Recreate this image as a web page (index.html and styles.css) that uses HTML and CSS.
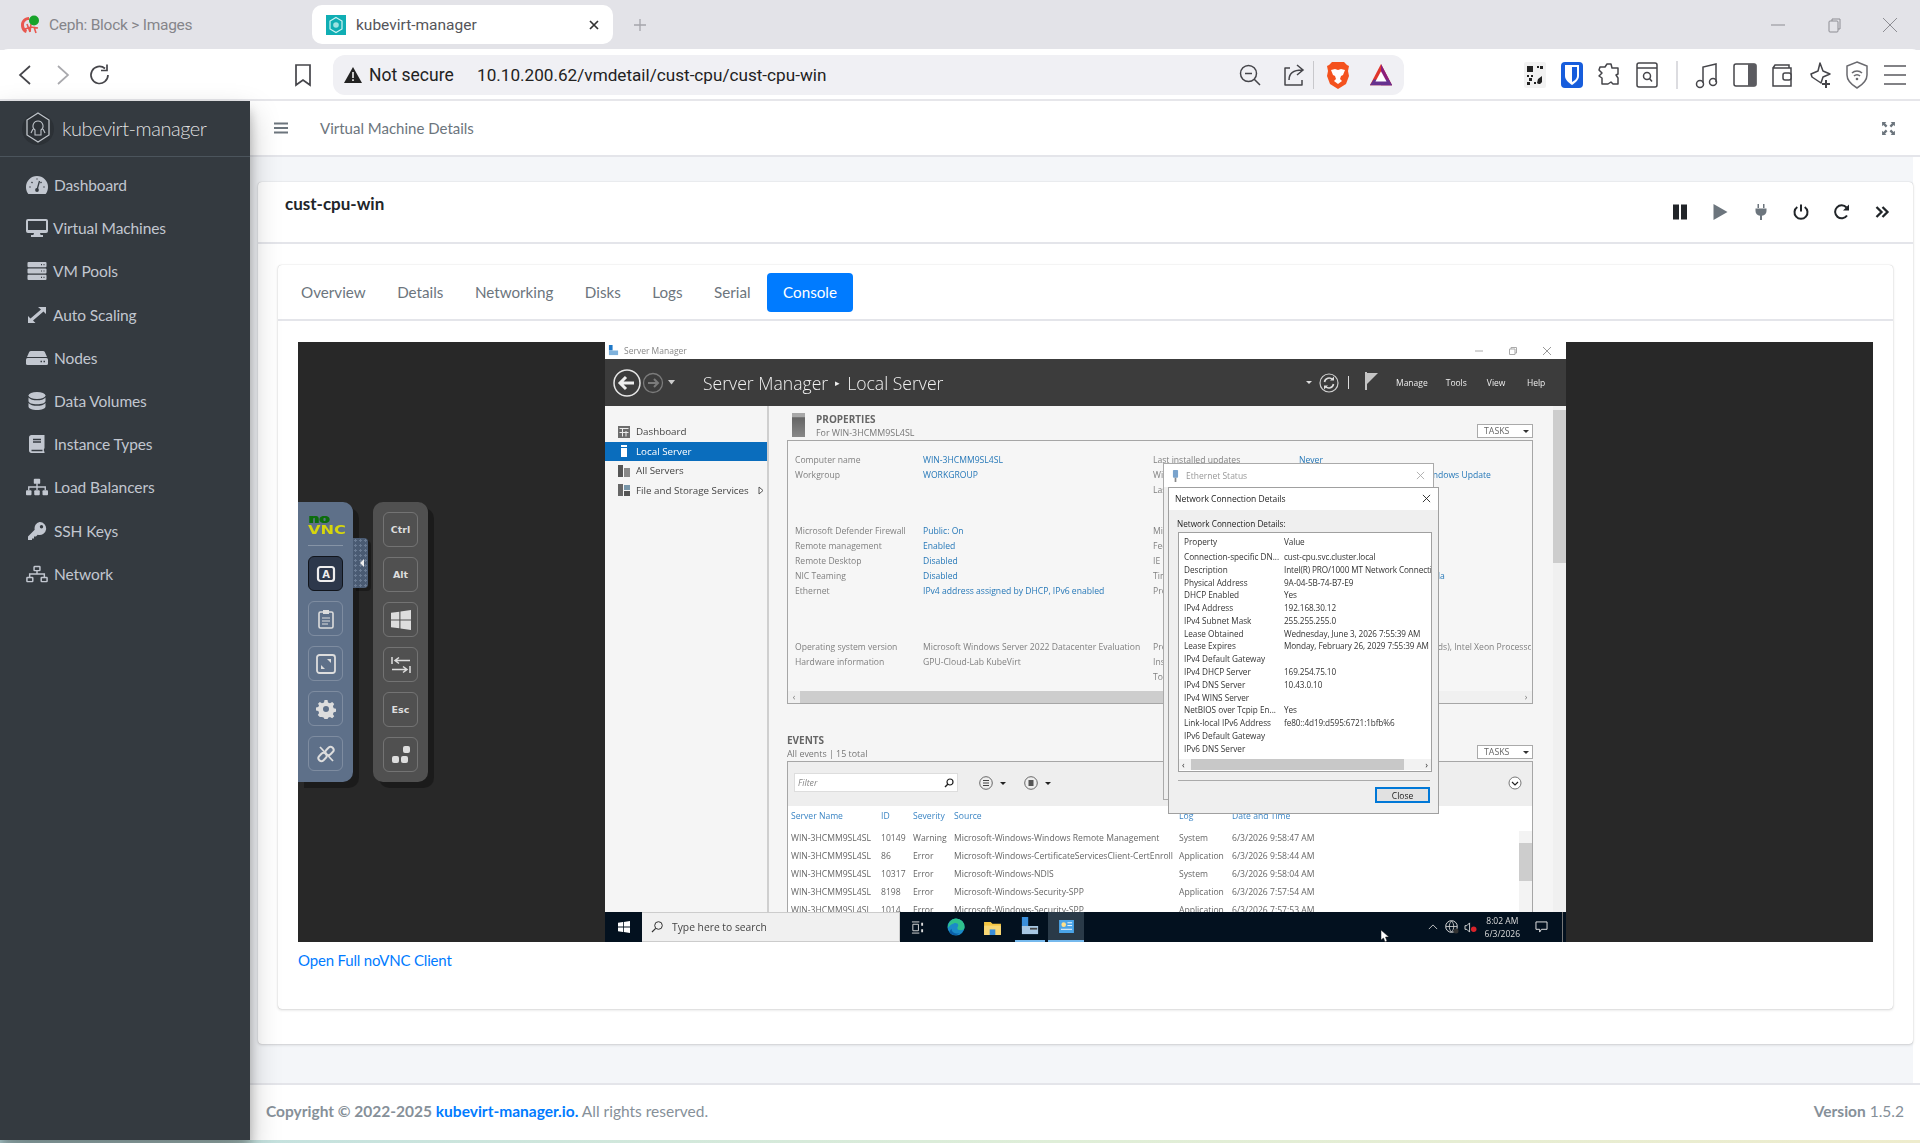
FILE: index.html
```html
<!DOCTYPE html>
<html lang="en">
<head>
<meta charset="utf-8">
<title>kubevirt-manager</title>
<link rel="stylesheet" href="styles.css">
</head>
<body>
<div class="tabstrip">
  <div class="tab">
    <svg class="fav" viewBox="0 0 20 20"><path d="M9 2C4 2 1 6 1 10c0 4 2 7 5 8l1-3c-2-1-3-3-3-5 0-3 2-5 5-5z" fill="#e8584f"/><path d="M7 9l3 8M11 9l-1 8M14 12l2 6M5 14l6-2 7 1" stroke="#e8584f" stroke-width="1.6" fill="none"/><circle cx="14" cy="5.5" r="5" fill="#18a32a"/></svg>
    <span class="tab-ceph">Ceph: Block &gt; Images</span>
  </div>
  <div class="tab tab-active">
    <svg class="fav" viewBox="0 0 20 20"><rect width="20" height="20" fill="#10aeb4"/><path d="M10 2.5l6 3.5v8l-6 3.5L4 14V6z" fill="none" stroke="#cdf3f2" stroke-width="1.2"/><circle cx="10" cy="10" r="2.8" fill="#9ee3e2"/></svg>
    <span class="tab-name">kubevirt-manager</span>
    <svg class="tab-x" viewBox="0 0 12 12"><path d="M2 2l8 8M10 2l-8 8" stroke="#333" stroke-width="1.7"/></svg>
  </div>
  <svg class="tab-plus" viewBox="0 0 14 14"><path d="M7 1v12M1 7h12" stroke="#a5a5ab" stroke-width="1.3"/></svg>
  <div class="win-ctl">
    <svg viewBox="0 0 16 16"><path d="M1 8h14" stroke="#8d8d93"/></svg>
    <svg viewBox="0 0 16 16"><rect x="3" y="4" width="9" height="11" rx="1" fill="none" stroke="#8d8d93"/><path d="M6 4V2h8v10h-2" fill="none" stroke="#8d8d93"/></svg>
    <svg viewBox="0 0 16 16"><path d="M1 1l14 14M15 1L1 15" stroke="#8d8d93"/></svg>
  </div>
</div>

<div class="toolbar">
  <svg class="tb-ic back" viewBox="0 0 24 24"><path d="M16 3L6 12l10 9" fill="none" stroke="#45454a" stroke-width="1.7"/></svg>
  <svg class="tb-ic fwd" viewBox="0 0 24 24"><path d="M8 3l10 9-10 9" fill="none" stroke="#a9a9ad" stroke-width="1.7"/></svg>
  <svg class="tb-ic reload" viewBox="0 0 24 24"><path d="M20 12a8.5 8.5 0 1 1-3-6.5" fill="none" stroke="#45454a" stroke-width="1.7"/><path d="M19 1.500v6h-6" fill="none" stroke="#45454a" stroke-width="1.700"/></svg>
  <svg class="tb-ic bookmark" viewBox="0 0 24 24"><path d="M5 2h14v20l-7-5-7 5z" fill="none" stroke="#45454a" stroke-width="1.7"/></svg>
  <div class="addr">
    <svg class="warn" viewBox="0 0 18 16"><path d="M9 0l9 16H0z" fill="#222"/><path d="M9 5v6M9 12.300v1.700" stroke="#fff" stroke-width="1.500"/></svg>
    <span class="ns">Not secure</span>
    <span class="url">10.10.200.62/vmdetail/cust-cpu/cust-cpu-win</span>
    <svg class="tb-ic zoomout" viewBox="0 0 24 24"><circle cx="10.500" cy="10.500" r="8" fill="none" stroke="#45454a" stroke-width="1.500"/><path d="M16 16l6 6M7 10.500h7" stroke="#45454a" stroke-width="1.500"/></svg>
    <svg class="tb-ic share" viewBox="0 0 24 24"><path d="M9 5H4v17h17v-5" fill="none" stroke="#45454a" stroke-width="1.500" stroke-linejoin="round"/><path d="M8 17c0-7 4-10 13-10M16 2l6 5-6 5" fill="none" stroke="#45454a" stroke-width="1.500"/></svg>
    <i class="tb-sep"></i>
    <svg class="tb-ic brave" viewBox="0 0 24 28"><path d="M6 1h12l3 3 2 1-1 5 1 5-3 8-8 5-8-5-3-8 1-5-1-5 2-1z" fill="#f4521e"/><path d="M5 9l4-1 3 1 3-1 4 1-2 5-2 1-1 3 2 2-4 3-4-3 2-2-1-3-2-1z" fill="#fff"/></svg>
    <svg class="tb-ic bat" viewBox="0 0 26 26"><path d="M13 1l12 23H1z" fill="#e0362c"/><path d="M13 1l12 23H13z" fill="#8a1f7d"/><path d="M1 24h24l-4-6H5z" fill="#66318f"/><path d="M13 9l6 11H7z" fill="#fff"/></svg>
  </div>
  <svg class="ext qr" viewBox="0 0 22 26"><rect width="22" height="26" rx="2" fill="#f2f2f2"/><path d="M3 4h6v6H3zM13 4h2v2h-2zM16 4h3v3h-3zM3 13h2v2H3zM7 13h2v2H7zM5 16h3v3H5zM3 20h3v3H3zM10 20h2v2h-2zM14 17l4-3v4a3 3 0 0 1-5 3z" fill="#222"/></svg>
  <svg class="ext" viewBox="0 0 24 28"><rect x="1" y="1" width="22" height="26" rx="4" fill="#175ddc"/><path d="M5 4h14v11c0 4-4 7-7 9-3-2-7-5-7-9z" fill="#fff"/><path d="M12 6h5v9c0 3-3 5-5 6z" fill="#175ddc"/></svg>
  <svg class="ext" viewBox="0 0 24 26"><path d="M10 2h4l1 4h6v6l-2 1 2 3v6h-5l-2-2-3 2H5v-6l-3-2 3-3-3-3 1-3h5z" fill="none" stroke="#45454a" stroke-width="1.500" stroke-linejoin="round"/></svg>
  <svg class="ext" viewBox="0 0 24 26"><rect x="2" y="1" width="20" height="24" rx="2" fill="none" stroke="#45454a" stroke-width="1.500"/><path d="M2 6h20" stroke="#45454a" stroke-width="1.500"/><circle cx="12" cy="14" r="3.500" fill="none" stroke="#45454a" stroke-width="1.500"/><path d="M14.500 16.500l2.500 3" stroke="#45454a" stroke-width="1.500"/></svg>
  <i class="tb-sep sep2"></i>
  <svg class="ext" viewBox="0 0 24 28"><path d="M8 22V6l13-3v18" fill="none" stroke="#45454a" stroke-width="1.500"/><circle cx="5" cy="23" r="3.500" fill="none" stroke="#45454a" stroke-width="1.500"/><circle cx="18" cy="21" r="3.500" fill="none" stroke="#45454a" stroke-width="1.500"/></svg>
  <svg class="ext" viewBox="0 0 24 26"><rect x="1" y="2" width="22" height="22" rx="2" fill="none" stroke="#45454a" stroke-width="1.500"/><rect x="15" y="2" width="8" height="22" fill="#5b5b60"/></svg>
  <svg class="ext" viewBox="0 0 24 26"><path d="M3 6h18v18H3zM3 6l2-3h14v3" fill="none" stroke="#45454a" stroke-width="1.500"/><rect x="13" y="11" width="8" height="7" rx="2" fill="#fff" stroke="#45454a" stroke-width="1.500"/></svg>
  <svg class="ext" viewBox="0 0 24 28"><path d="M12 2l3 8 7 3-7 3-2 6-9-6-1-3 7-3z" fill="none" stroke="#45454a" stroke-width="1.500" stroke-linejoin="round"/><path d="M18 19v8M14 23h8" stroke="#45454a" stroke-width="2"/></svg>
  <svg class="ext" viewBox="0 0 24 28"><path d="M12 1l10 4v9c0 6-5 10-10 13C7 24 2 20 2 14V5z" fill="none" stroke="#6a6a6f" stroke-width="1.500"/><path d="M7 12a7 7 0 0 1 10 0M9 15a4 4 0 0 1 6 0" fill="none" stroke="#6a6a6f" stroke-width="1.500"/><circle cx="12" cy="18" r="1.300" fill="#6a6a6f"/></svg>
  <svg class="ext" viewBox="0 0 24 24"><path d="M1 3h22M1 12h22M1 21h22" stroke="#5a5a5f" stroke-width="1.500"/></svg>
</div>

<div class="app">
  <aside class="sidebar">
    <div class="brand">
      <svg class="brand-logo" viewBox="0 0 36 36"><circle cx="18" cy="19" r="16" fill="#2c3136"/><path d="M18 3l11 7v15l-11 7-11-7V10z" fill="none" stroke="#bfc4ca" stroke-width="1.300"/><path d="M18 11a5 5 0 0 0-3 9v5h6v-5a5 5 0 0 0-3-9zM13 19l-2 4M23 19l2 4" fill="none" stroke="#bfc4ca" stroke-width="1.100"/></svg>
      <span class="brand-text">kubevirt-manager</span>
    </div>
    <nav class="menu">
      <a class="menu-item"><svg viewBox="0 0 22 18"><path d="M11 0a11 11 0 0 0-11 11c0 2.200.6 4.300 1.600 6 .2.400.6 1 1.400 1h16c.8 0 1.200-.6 1.400-1 1-1.700 1.600-3.800 1.600-6A11 11 0 0 0 11 0z" fill="currentColor"/><path d="M11 14l2.500-9M3.500 11h1M5.500 6l1 1M11 2.500v1M17.500 11h1M15.500 6l-1 1" stroke="#343a40" stroke-width="1.300"/><circle cx="11" cy="14" r="1.900" fill="#343a40"/></svg>Dashboard</a>
      <a class="menu-item"><svg viewBox="0 0 22 18"><path d="M2 0h18a2 2 0 0 1 2 2v10a2 2 0 0 1-2 2h-6l.6 2H17v2H5v-2h2.400L8 14H2a2 2 0 0 1-2-2V2a2 2 0 0 1 2-2zm0 2v9h18V2z" fill="currentColor" fill-rule="evenodd"/></svg><span class="tl">Virtual Machines</span></a>
      <a class="menu-item"><svg viewBox="0 0 22 18"><g fill="currentColor"><rect x="1.500" y="0" width="19" height="5.200" rx="1"/><rect x="1.500" y="6.400" width="19" height="5.200" rx="1"/><rect x="1.500" y="12.800" width="19" height="5.200" rx="1"/></g><path d="M15 2.600h1M17.500 2.600h1M15 9h1M17.500 9h1M15 15.400h1M17.500 15.400h1" stroke="#343a40" stroke-width="1.200"/></svg><span class="tl">VM Pools</span></a>
      <a class="menu-item"><svg viewBox="0 0 22 18"><path d="M12 1h8v7l-2.500-2.400L7 14.500 9.500 17H2v-7l2.500 2.500L15 3.500z" fill="currentColor"/></svg><span class="tl">Auto Scaling</span></a>
      <a class="menu-item"><svg viewBox="0 0 22 18"><path d="M5 2h12c.8 0 1.400.4 1.800 1L21 8H1l2.200-5C3.600 2.400 4.200 2 5 2z" fill="currentColor"/><rect x="0" y="9" width="22" height="7" rx="1.500" fill="currentColor"/><path d="M14.500 12.500h1.500M17.500 12.500H19" stroke="#343a40" stroke-width="1.300"/></svg>Nodes</a>
      <a class="menu-item"><svg viewBox="0 0 22 18"><g fill="currentColor"><ellipse cx="11" cy="3.500" rx="8.500" ry="3.500"/><path d="M2.500 5.500c1.500 2 5 2.800 8.500 2.800s7-.8 8.500-2.800V9c0 2-3.800 3.300-8.500 3.300S2.500 11 2.500 9z"/><path d="M2.500 11c1.500 2 5 2.800 8.500 2.800s7-.8 8.500-2.800v3.500C19.500 16.500 15.700 18 11 18s-8.500-1.500-8.500-3.500z"/></g></svg>Data Volumes</a>
      <a class="menu-item"><svg viewBox="0 0 22 18"><path d="M5.500 0H18.500v13c0 .5-.2.800-.6 1v2.200c.4.200.6.500.6.800v1H5.500C4 18 3 17 3 15.500v-13C3 1 4 0 5.500 0z" fill="currentColor"/><path d="M7 4.500h8M7 7h8M5.500 15.500h11" stroke="#343a40" stroke-width="1.300"/></svg>Instance Types</a>
      <a class="menu-item"><svg viewBox="0 0 24 18"><g fill="currentColor"><rect x="8.500" y="0" width="7" height="5.500" rx="1"/><rect x="0" y="12.500" width="6" height="5.500" rx="1"/><rect x="9" y="12.500" width="6" height="5.500" rx="1"/><rect x="18" y="12.500" width="6" height="5.500" rx="1"/></g><path d="M12 5v7.500M3 12.500V9h18v3.500" fill="none" stroke="currentColor" stroke-width="1.500"/></svg>Load Balancers</a>
      <a class="menu-item"><svg viewBox="0 0 22 18"><path d="M13.500 0a6.500 6.500 0 1 1-1.800 12.700l-1.700 1.800H8v2H6v1.500H2v-3.500l6.700-6.800A6.500 6.500 0 0 1 13.500 0zm2 3a1.700 1.700 0 1 0 0 3.400 1.700 1.700 0 0 0 0-3.400z" fill="currentColor" fill-rule="evenodd"/></svg><span>SSH Keys</span></a>
      <a class="menu-item"><svg viewBox="0 0 24 18"><g fill="none" stroke="currentColor" stroke-width="1.600"><rect x="8.800" y=".8" width="6.400" height="4.500" rx=".6"/><rect x="1" y="12.800" width="6.400" height="4.500" rx=".6"/><rect x="16.600" y="12.800" width="6.400" height="4.500" rx=".6"/><path d="M12 5.500v3.500M4 12.500V9h16v3.500"/></g></svg>Network</a>
    </nav>
  </aside>

  <main class="main">
    <header class="topbar">
      <svg class="burger" viewBox="0 0 14 12"><path d="M0 1.500h14M0 6h14M0 10.500h14" stroke="#6c757d" stroke-width="1.800"/></svg>
      <span class="crumb">Virtual Machine Details</span>
      <svg class="expand" viewBox="0 0 14 14"><path d="M1 1h4L3.800 2.200 6 4.500 4.500 6 2.200 3.800 1 5zM13 1v4l-1.200-1.200L9.500 6 8 4.500l2.200-2.300L9 1zM1 13V9l1.200 1.200L4.500 8 6 9.500l-2.200 2.300L5 13zM13 13H9l1.200-1.200L8 9.500 9.500 8l2.300 2.200L13 9z" fill="#6c757d"/></svg>
    </header>

    <section class="content">
      <div class="card">
        <div class="card-head">
          <h1 class="vm-name">cust-cpu-win</h1>
          <div class="actions">
            <svg viewBox="0 0 16 16"><path d="M1 .5h6v15H1zM9 .5h6v15H9z" fill="#212529"/></svg>
            <svg viewBox="0 0 16 16"><path d="M1.500 0L15.500 8 1.500 16z" fill="#6c757d"/></svg>
            <svg viewBox="0 0 16 16"><path d="M4.500 0h1.500v4H4.500zM10 0h1.500v4H10zM2.500 4.500h11v2.500c0 2.500-1.800 4.300-4.500 4.700V16H7v-4.300C4.300 11.300 2.500 9.500 2.500 7z" fill="#6c757d"/></svg>
            <svg viewBox="0 0 16 16"><path d="M8 .5v7" stroke="#212529" stroke-width="2"/><path d="M4.300 3a6.500 6.500 0 1 0 7.400 0" fill="none" stroke="#212529" stroke-width="2"/></svg>
            <svg viewBox="0 0 16 16"><path d="M13 11.500A6.500 6.500 0 1 1 12.500 3.500" fill="none" stroke="#212529" stroke-width="2"/><path d="M15 .5V6.500H9z" fill="#212529"/></svg>
            <svg viewBox="0 0 16 16"><path d="M2.500 3l5 5-5 5M8.500 3l5 5-5 5" fill="none" stroke="#212529" stroke-width="2.300"/></svg>
          </div>
        </div>
        <div class="card-body">
          <div class="inner">
            <div class="tabs">
              <a class="t">Overview</a><a class="t">Details</a><a class="t">Networking</a><a class="t">Disks</a><a class="t">Logs</a><a class="t">Serial</a><a class="t on">Console</a>
            </div>
            <div class="inner-body">
              <div class="screen">
                <div class="vm">
                  <div class="sm-title">
                    <svg viewBox="0 0 12 12" class="sm-ic"><rect x="1" y="0" width="4" height="6" fill="#1f78c8"/><rect x="1" y="6" width="10" height="5" fill="#7fb2dc"/></svg>
                    <span>Server Manager</span>
                    <div class="sm-ctl">
                      <svg viewBox="0 0 10 10"><path d="M1 5h8" stroke="#aaa"/></svg>
                      <svg viewBox="0 0 10 10"><path d="M1.500 3h5.500v5.500H1.500zM3 3V1.500h5.500V7H7" fill="none" stroke="#aaa"/></svg>
                      <svg viewBox="0 0 10 10"><path d="M1 1l8 8M9 1L1 9" stroke="#999"/></svg>
                    </div>
                  </div>
                  <div class="sm-head">
                    <svg class="sm-back" viewBox="0 0 62 28"><circle cx="14" cy="14" r="13" fill="none" stroke="#e6e6e6" stroke-width="1.500"/><path d="M7 14h14M13 8l-6 6 6 6" fill="none" stroke="#eee" stroke-width="3"/><circle cx="40" cy="14" r="9.500" fill="none" stroke="#7b7b7b" stroke-width="1.300"/><path d="M35 14h10M41 10l4 4-4 4" fill="none" stroke="#7b7b7b" stroke-width="2"/><path d="M55 11h7l-3.500 4.500z" fill="#ccc"/></svg>
                    <div class="sm-crumb"><span>Server Manager</span><i>▸</i><span>Local Server</span></div>
                    <div class="sm-tools">
                      <i class="sm-dd"></i>
                      <svg viewBox="0 0 20 20" class="ref"><circle cx="10" cy="10" r="9" fill="none" stroke="#cfcfcf" stroke-width="1.200"/><path d="M5.500 9a4.700 4.700 0 0 1 8-2.500M14.500 11a4.700 4.700 0 0 1-8 2.500" fill="none" stroke="#ddd" stroke-width="1.600"/><path d="M15 3.500v4h-4zM5 16.500v-4h4z" fill="#ddd"/></svg>
                      <i class="sm-bar"></i>
                      <svg viewBox="0 0 13 18" class="flag"><path d="M0 0h2v18H0z" fill="#c4c4c4"/><path d="M2 1h11L2 12z" fill="#c4c4c4"/></svg>
                      <span class="m1">Manage</span><span class="m2">Tools</span><span class="m3">View</span><span class="m4">Help</span>
                    </div>
                  </div>
                  <div class="sm-body">
                    <div class="sm-nav">
                      <div class="sn"><svg viewBox="0 0 12 12"><path d="M0 0h12v12H0z" fill="#6d6d6d"/><path d="M1.500 2.500h9M4.500 2.500v8M8 5v5.500M1.500 6.500h9" stroke="#eee"/></svg>Dashboard</div>
                      <div class="sn sel"><svg viewBox="0 0 12 12"><rect x="3" y="0" width="6" height="12" fill="#fff"/><path d="M3 2.500h6" stroke="#0a6dbd"/></svg>Local Server</div>
                      <div class="sn"><svg viewBox="0 0 12 12"><rect x="0" y="0" width="5" height="12" fill="#555"/><rect x="6" y="3" width="6" height="9" fill="#888"/></svg>All Servers</div>
                      <div class="sn"><svg viewBox="0 0 12 12"><rect x="0" y="0" width="5" height="12" fill="#666"/><rect x="6" y="1" width="6" height="5" fill="#7895a8"/><rect x="6" y="7" width="6" height="5" fill="#555"/></svg>File and Storage Services<svg class="sn-arr" viewBox="0 0 6 9"><path d="M1 1l4 3.500L1 8z" fill="#fff" stroke="#555"/></svg></div>
                    </div>
                    <div class="sm-main">
                      <div class="sec-head">
                        <i class="srv-ic"></i>
                        <div class="sec-txt"><b>PROPERTIES</b><span>For WIN-3HCMM9SL4SL</span></div>
                        <div class="tasks">TASKS<i></i></div>
                      </div>
                      <div class="prop-box">
                        <div class="pg">
                          <div class="pr"><span>Computer name</span><a>WIN-3HCMM9SL4SL</a><span>Last installed updates</span><a>Never</a></div>
                          <div class="pr"><span>Workgroup</span><a>WORKGROUP</a><span>Windows Update</span><a class="wu">Install updates only by using Windows Update</a></div>
                          <div class="pr"><span></span><a></a><span>Last checked for updates</span><a>Never</a></div>
                        </div>
                        <div class="pg pg2">
                          <div class="pr"><span>Microsoft Defender Firewall</span><a>Public: On</a><span>Microsoft Defender Antivirus</span><a></a></div>
                          <div class="pr"><span>Remote management</span><a>Enabled</a><span>Feedback &amp; Diagnostics</span><a></a></div>
                          <div class="pr"><span>Remote Desktop</span><a>Disabled</a><span>IE Enhanced Security</span><a></a></div>
                          <div class="pr"><span>NIC Teaming</span><a>Disabled</a><span>Time zone</span><a class="tz">(UTC) Pacific Time (US &amp; Canada</a></div>
                          <div class="pr"><span>Ethernet</span><a>IPv4 address assigned by DHCP, IPv6 enabled</a><span>Product ID</span><a></a></div>
                        </div>
                        <div class="pg pg3">
                          <div class="pr"><span>Operating system version</span><span>Microsoft Windows Server 2022 Datacenter Evaluation</span><span>Processors</span><span class="cpu">QEMU (8 threads), Intel Xeon Processor</span></div>
                          <div class="pr"><span>Hardware information</span><span>GPU-Cloud-Lab KubeVirt</span><span>Installed memory</span><span></span></div>
                          <div class="pr"><span></span><span></span><span>Total disk space</span><span></span></div>
                        </div>
                        <div class="hbar"><i class="ar">‹</i><i class="th"></i><i class="ar">›</i></div>
                      </div>
                      <div class="sec-head ev-head">
                        <div class="sec-txt"><b>EVENTS</b><span>All events | 15 total</span></div>
                        <div class="tasks">TASKS<i></i></div>
                      </div>
                      <div class="ev-box">
                        <div class="ev-tool">
                          <div class="filter"><em>Filter</em><svg viewBox="0 0 10 10"><circle cx="6" cy="4" r="3" fill="none" stroke="#222" stroke-width="1.200"/><path d="M4 6L1 9" stroke="#222" stroke-width="1.500"/></svg></div>
                          <svg class="ev-ic" viewBox="0 0 14 14"><circle cx="7" cy="7" r="6.300" fill="none" stroke="#666"/><path d="M4 4.500h6M4 7h6M4 9.500h6" stroke="#444"/></svg><i class="dd"></i>
                          <svg class="ev-ic second" viewBox="0 0 14 14"><circle cx="7" cy="7" r="6.300" fill="none" stroke="#666"/><rect x="4.500" y="4" width="5" height="6" fill="#555"/></svg><i class="dd"></i>
                          <svg class="ev-chev" viewBox="0 0 14 14"><circle cx="7" cy="7" r="6" fill="#fff" stroke="#777"/><path d="M4 6l3 3 3-3" fill="none" stroke="#222" stroke-width="1.200"/></svg>
                        </div>
                        <div class="ev-row ev-hd"><span>Server Name</span><span>ID</span><span>Severity</span><span>Source</span><span>Log</span><span>Date and Time</span></div>
                        <div class="ev-row"><span>WIN-3HCMM9SL4SL</span><span>10149</span><span>Warning</span><span>Microsoft-Windows-Windows Remote Management</span><span>System</span><span>6/3/2026 9:58:47 AM</span></div>
                        <div class="ev-row"><span>WIN-3HCMM9SL4SL</span><span>86</span><span>Error</span><span>Microsoft-Windows-CertificateServicesClient-CertEnroll</span><span>Application</span><span>6/3/2026 9:58:44 AM</span></div>
                        <div class="ev-row"><span>WIN-3HCMM9SL4SL</span><span>10317</span><span>Error</span><span>Microsoft-Windows-NDIS</span><span>System</span><span>6/3/2026 9:58:04 AM</span></div>
                        <div class="ev-row"><span>WIN-3HCMM9SL4SL</span><span>8198</span><span>Error</span><span>Microsoft-Windows-Security-SPP</span><span>Application</span><span>6/3/2026 7:57:54 AM</span></div>
                        <div class="ev-row"><span>WIN-3HCMM9SL4SL</span><span>1014</span><span>Error</span><span>Microsoft-Windows-Security-SPP</span><span>Application</span><span>6/3/2026 7:57:53 AM</span></div>
                        <div class="ev-scroll"><i></i></div>
                      </div>
                    </div>
                    <div class="sm-scroll"><i></i></div>
                  </div>
                  <div class="taskbar">
                    <div class="start"><svg viewBox="0 0 12 12"><path d="M0 1.700L5 1v4.500H0zM5.800.9L12 0v5.500H5.800zM0 6.400h5V11l-5-.7zM5.800 6.400H12V12l-6.200-.9z" fill="#fff"/></svg></div>
                    <div class="search"><svg viewBox="0 0 12 12"><circle cx="7.500" cy="4.500" r="3.800" fill="none" stroke="#333"/><path d="M4.700 7.300L1 11" stroke="#333" stroke-width="1.200"/></svg>Type here to search</div>
                    <svg class="tk tv" viewBox="0 0 14 14"><path d="M1 1h8M1 13h8M2 3.500h6v7H2z" fill="none" stroke="#ddd"/><path d="M11 2h2v3h-2zM11 9h2v3h-2z" fill="#ddd"/></svg>
                    <svg class="tk edge" viewBox="0 0 20 20"><circle cx="10" cy="10" r="9.500" fill="#1b8ac8"/><path d="M10 .5a9.500 9.500 0 0 1 9.500 10c0 2-2 3-4 3-3 0-4-1-4-2.500 0-1 1-1.500 1-3 0-2-3-3-5-2C4 7 2.500 9 1 11 1 5 5 .5 10 .5z" fill="#2fc18c"/><path d="M5 12c0 4 4 6 9 5-3 3-9 2.500-11-1 0-2 1-3 2-4z" fill="#0a5ea8"/></svg>
                    <svg class="tk folder" viewBox="0 0 18 16"><path d="M0 2h7l2 2h9v12H0z" fill="#f4c542"/><rect x="0" y="6" width="18" height="10" fill="#f8d775"/><rect x="6" y="10" width="6" height="6" fill="#3a8edb"/></svg>
                    <div class="tk-wrap sm-app"><svg viewBox="0 0 20 20"><rect x="1" y="0" width="7" height="13" fill="#3a8edb"/><rect x="1" y="10" width="18" height="9" fill="#a8c7e3"/><rect x="10" y="12" width="8" height="2" fill="#444"/></svg></div>
                    <div class="tk-wrap cp-app"><svg viewBox="0 0 16 14"><rect width="16" height="14" fill="#4aa4e8"/><circle cx="5" cy="5" r="2.500" fill="#ffe08a"/><path d="M9 3h5M9 6h5M2 10h12" stroke="#fff"/></svg></div>
                    <div class="tray">
                      <svg class="chev" viewBox="0 0 12 7"><path d="M1 6l5-5 5 5" fill="none" stroke="#ddd"/></svg>
                      <svg class="globe" viewBox="0 0 14 14"><circle cx="6.500" cy="6.500" r="5.800" fill="none" stroke="#ddd"/><path d="M1 6.500h11M6.500 1c-3 3-3 8 0 11M6.500 1c3 3 3 8 0 11" fill="none" stroke="#ddd" stroke-width=".8"/><circle cx="11" cy="11" r="2.500" fill="#333"/></svg>
                      <svg class="spk" viewBox="0 0 14 12"><path d="M1 4h2l3-3v10L3 8H1z" fill="none" stroke="#ddd"/><circle cx="10.500" cy="8" r="3" fill="#d8232a"/></svg>
                      <div class="clock"><span>8:02 AM</span><span>6/3/2026</span></div>
                      <svg class="notif" viewBox="0 0 14 13"><path d="M1 1h12v8H7l-2 3V9H1z" fill="none" stroke="#eee"/></svg>
                      <i class="peek"></i>
                    </div>
                  </div>
                  <div class="win eth">
                    <div class="eth-head"><svg viewBox="0 0 8 14"><rect x="1" y="0" width="6" height="9" rx="1" fill="#7aa3cc"/><rect x="3" y="9" width="2" height="5" fill="#888"/></svg><span>Ethernet Status</span><svg class="x" viewBox="0 0 10 10"><path d="M1 1l8 8M9 1L1 9" stroke="#aaa"/></svg></div>
                  </div>
                  <div class="win dlg">
                    <div class="dlg-head"><span>Network Connection Details</span><svg viewBox="0 0 10 10"><path d="M1 1l8 8M9 1L1 9" stroke="#222"/></svg></div>
                    <div class="dlg-body">
                      <div class="dlg-lbl">Network Connection Details:</div>
                      <div class="list">
                        <div class="li li-hd"><span>Property</span><span>Value</span></div>
                        <div class="li"><span>Connection-specific DN...</span><span>cust-cpu.svc.cluster.local</span></div>
                        <div class="li"><span>Description</span><span>Intel(R) PRO/1000 MT Network Connection</span></div>
                        <div class="li"><span>Physical Address</span><span>9A-04-5B-74-B7-E9</span></div>
                        <div class="li"><span>DHCP Enabled</span><span>Yes</span></div>
                        <div class="li"><span>IPv4 Address</span><span>192.168.30.12</span></div>
                        <div class="li"><span>IPv4 Subnet Mask</span><span>255.255.255.0</span></div>
                        <div class="li"><span>Lease Obtained</span><span>Wednesday, June 3, 2026 7:55:39 AM</span></div>
                        <div class="li"><span>Lease Expires</span><span>Monday, February 26, 2029 7:55:39 AM</span></div>
                        <div class="li"><span>IPv4 Default Gateway</span><span></span></div>
                        <div class="li"><span>IPv4 DHCP Server</span><span>169.254.75.10</span></div>
                        <div class="li"><span>IPv4 DNS Server</span><span>10.43.0.10</span></div>
                        <div class="li"><span>IPv4 WINS Server</span><span></span></div>
                        <div class="li"><span>NetBIOS over Tcpip En...</span><span>Yes</span></div>
                        <div class="li"><span>Link-local IPv6 Address</span><span>fe80::4d19:d595:6721:1bfb%6</span></div>
                        <div class="li"><span>IPv6 Default Gateway</span><span></span></div>
                        <div class="li"><span>IPv6 DNS Server</span><span></span></div>
                        <div class="lbar"><i>‹</i><b></b><i>›</i></div>
                      </div>
                      <div class="dlg-sep"></div>
                      <div class="dlg-foot"><button class="close-btn" type="button">Close</button></div>
                    </div>
                  </div>
                  <svg class="cursor" viewBox="0 0 8 12"><path d="M0 0l8 7H4.500L6 11l-2 1-1.500-4L0 10z" fill="#fff" stroke="#111" stroke-width=".5"/></svg>
                </div>
                <div class="vnc">
                  <div class="vnc-panel blue">
                    <div class="vnc-logo"><span class="lg-no">no</span><span class="lg-vnc">VNC</span></div>
                    <i class="vnc-div"></i>
                    <div class="vb act"><svg viewBox="0 0 20 20"><rect x="2" y="3" width="16" height="14" rx="2.500" fill="none" stroke="#eee" stroke-width="2.200"/><text x="10" y="14" class="vt">A</text></svg></div>
                    <div class="vb"><svg viewBox="0 0 20 20"><rect x="3" y="3" width="14" height="16" rx="1.500" fill="none" stroke="#ddd" stroke-width="1.600"/><rect x="7" y="1" width="6" height="4" fill="#ddd"/><path d="M6 9h8M6 12h8M6 15h6" stroke="#ddd"/></svg></div>
                    <div class="vb"><svg viewBox="0 0 20 20"><rect x="1" y="1" width="18" height="18" rx="2.500" fill="none" stroke="#ddd" stroke-width="1.800"/><path d="M11 5h4v4zM9 15H5v-4z" fill="#ddd"/></svg></div>
                    <div class="vb"><svg viewBox="0 0 20 20"><path d="M8.500 1h3l.5 2.500 2 .8L16.200 3l2 2-1.300 2.200.8 2 2.300.5v3l-2.300.5-.8 2 1.300 2.100-2 2-2.200-1.300-2 .8-.5 2.200h-3l-.5-2.200-2-.8L3.800 18l-2-2 1.300-2.100-.8-2L0 11.400v-3l2.300-.5.8-2L1.800 5l2-2L6 4.300l2-.8zM10 7a3 3 0 1 0 0 6 3 3 0 0 0 0-6z" fill="#ddd" fill-rule="evenodd"/></svg></div>
                    <div class="vb"><svg viewBox="0 0 20 20"><g fill="none" stroke="#ddd" stroke-width="2"><rect x="2" y="10" width="9" height="6" rx="3" transform="rotate(-45 6.500 13)"/><rect x="9" y="4" width="9" height="6" rx="3" transform="rotate(-45 13.500 7)"/></g><path d="M4 3l13 14" stroke="#ddd" stroke-width="1.800"/></svg></div>
                  </div>
                  <div class="vnc-handle"><i></i></div>
                  <div class="vnc-panel gray">
                    <div class="vb gt">Ctrl</div>
                    <div class="vb gt">Alt</div>
                    <div class="vb"><svg viewBox="0 0 18 18"><path d="M0 2.500L7.500 1.500v7H0zM8.500 1.300L18 0v8.500H8.500zM0 9.500h7.500v7L0 15.500zM8.500 9.500H18V18l-9.500-1.300z" fill="#ddd"/></svg></div>
                    <div class="vb"><svg viewBox="0 0 20 20"><path d="M1 2v7M4 5.500h15M8 2.500L4 5.500l4 3M19 11v7M1 14.500h15M12 11.500l4 3-4 3" fill="none" stroke="#ddd" stroke-width="1.500"/></svg></div>
                    <div class="vb gt">Esc</div>
                    <div class="vb"><svg viewBox="0 0 20 20"><rect x="12" y="1" width="7" height="7" rx="2" fill="#ddd"/><rect x="1" y="11" width="7" height="7" rx="2" fill="#ddd"/><rect x="10" y="11" width="7" height="7" rx="2" fill="#ddd"/></svg></div>
                  </div>
                </div>
              </div>
              <a class="novnc-link">Open Full noVNC Client</a>
            </div>
          </div>
        </div>
      </div>
    </section>

    <footer class="foot">
      <span class="copy"><b>Copyright © 2022-2025 <a>kubevirt-manager.io.</a></b> All rights reserved.</span>
      <span class="ver"><b>Version</b> 1.5.2</span>
    </footer>
  </main>
</div>
<div class="strip"></div>
</body>
</html>
```
FILE: styles.css
```css
* { box-sizing: border-box; }
html, body { margin: 0; height: 1143px; overflow: hidden; }
body { width: 1920px; background: #fff; font-family: "Lato", "Liberation Sans", sans-serif; display: flex; flex-direction: column; }
i { font-style: normal; }
a { text-decoration: none; }

/* browser chrome */
.tabstrip { height: 50px; background: #e3e3e8; display: flex; align-items: center; padding: 0 0 1px 20px; flex: none; font-family: "Roboto", sans-serif; font-size: 15.5px; }
.tab { display: flex; align-items: center; color: #85858a; width: 292px; height: 39px; }
.tab-ceph { letter-spacing: -.25px; }
.tab .fav { width: 20px; height: 20px; margin-right: 9px; flex: none; }
.tab-active { background: #fff; color: #55555a; width: 301px; border-radius: 10px; padding: 0 13px 0 14px; margin-right: 20px; }
.tab-active .fav { margin-right: 10px; }
.tab-name { flex: 1; }
.tab-x { width: 12px; height: 12px; }
.tab-plus { width: 14px; height: 14px; }
.win-ctl { margin-left: auto; display: flex; gap: 40px; padding-right: 22px; }
.win-ctl svg { width: 16px; height: 16px; }

.toolbar { height: 52px; flex: none; display: flex; align-items: center; background: #fff; border-bottom: 2px solid #e6e6ea; border-radius: 8px 8px 0 0; margin-top: -1px; padding-top: 2px; }
.tb-ic { width: 24px; height: 24px; flex: none; }
.back { margin-left: 14px; }
.fwd { margin-left: 12px; }
.reload { margin-left: 14px; }
.bookmark { margin-left: 179px; }
.addr { margin-left: 18px; width: 1071px; flex: none; height: 40px; background: #f0f0f4; border-radius: 12px; display: flex; align-items: center; padding-left: 11px; font-family: "Roboto", sans-serif; color: #222; }
.warn { width: 18px; height: 16px; margin-right: 7px; flex: none; }
.ns { font-size: 17.5px; width: 108px; flex: none; }
.url { font-size: 17.15px; flex: 1; white-space: nowrap; }
.zoomout { margin-right: 19px; }
.share { margin-right: 8px; }
.addr .tb-sep { margin-right: 12px; }
.tb-sep { width: 1px; height: 28px; background: #c8c8cc; flex: none; }
.brave { width: 24px; height: 28px; margin-right: 19px; }
.bat { width: 24px; height: 24px; margin-right: 11px; }
.ext { width: 24px; height: 28px; flex: none; margin-right: 13.5px; }
.qr { margin-left: 120px; width: 22px; }
.sep2 { background: #dcdce0; margin: 0 17px 0 4px; width: 2px; }

/* app */
.app { display: flex; height: 1039px; flex: none; }
.sidebar { width: 250px; flex: none; background: #343a40; box-shadow: 0 14px 28px rgba(0,0,0,.25), 0 10px 10px rgba(0,0,0,.22); position: relative; z-index: 2; }
.brand { height: 56px; border-bottom: 1px solid #4b545c; display: flex; align-items: center; padding: 0 0 2px 20px; }
.brand-logo { width: 36px; height: 36px; margin-right: 6px; flex: none; }
.brand-text { font-size: 20px; font-weight: 300; color: rgba(255,255,255,.85); letter-spacing: -.45px; }
.menu { display: flex; flex-direction: column; padding-top: 6.5px; }
.menu-item { height: 43.2px; display: flex; align-items: center; color: #c2c7d0; font-size: 15.5px; letter-spacing: -.1px; padding-left: 26px; }
.menu-item svg { width: 22px; height: 18px; flex: none; margin-right: 6px; }
.tl { margin-left: -1px; }

.main { flex: 1; display: flex; flex-direction: column; min-width: 0; }
.topbar { height: 56px; flex: none; background: #fff; border-bottom: 2px solid #e4e5ea; display: flex; align-items: center; padding-left: 24px; padding-right: 24px; }
.burger { width: 14px; height: 12px; }
.crumb { margin-left: 32px; font-size: 15px; color: #6c757d; }
.expand { width: 15px; height: 15px; margin-left: auto; }

.content { flex: 1; width: 1663px; background: #f4f6f9; padding: 25px 0 0 8px; }
.card { background: #fff; height: 862px; border-radius: 4px; box-shadow: 0 0 1px rgba(0,0,0,.25), 0 1px 3px rgba(0,0,0,.15); display: flex; flex-direction: column; }
.card-head { height: 62px; flex: none; border-bottom: 2px solid #e4e5ea; display: flex; padding: 11px 23px 0 27px; }
.vm-name { margin: 0; font-size: 17px; font-weight: 700; color: #212529; line-height: 22px; }
.actions { margin-left: auto; display: flex; gap: 24.4px; padding-top: 11px; }
.actions svg { width: 16px; height: 16px; }
.card-body { padding: 21px 20px 0 20px; }
.inner { height: 744px; border-radius: 4px; box-shadow: 0 0 1px rgba(0,0,0,.25), 0 1px 3px rgba(0,0,0,.15); display: flex; flex-direction: column; }
.tabs { height: 56px; flex: none; border-bottom: 2px solid #e4e5ea; display: flex; align-items: center; padding: 0 0 0 23px; font-size: 15.2px; color: #6c757d; }
.t { margin-right: 31.5px; }
.t.on { background: #007bff; color: #fff; height: 39px; display: flex; align-items: center; padding: 0 16px; border-radius: 4px; margin-left: -15px; }
.inner-body { padding: 21px 20px 0 20px; }
.novnc-link { display: block; color: #007bff; font-size: 15px; letter-spacing: -.18px; line-height: 24px; margin-top: 6px; }

/* console */
.screen { height: 600px; background: #282828; display: flex; justify-content: center; position: relative; }
.vm { width: 961px; height: 600px; background: #f5f5f5; position: relative; overflow: hidden; display: flex; flex-direction: column; font-family: "Open Sans", "Noto Sans", sans-serif; font-size: 8.500px; color: #555; filter: blur(.3px); }
.sm-title { height: 17px; flex: none; background: #fff; display: flex; align-items: center; padding-left: 3px; color: #888; }
.sm-ic { width: 11px; height: 11px; margin-right: 5px; }
.sm-ctl { margin-left: auto; display: flex; gap: 24px; padding-right: 14px; }
.sm-ctl svg { width: 10px; height: 10px; }
.sm-head { height: 47px; flex: none; background: #3c3c3c; color: #eee; display: flex; align-items: center; padding-left: 8px; position: relative; }
.sm-back { width: 62px; height: 28px; margin-right: 28px; }
.sm-crumb { font-size: 17.6px; font-weight: 300; display: flex; align-items: center; color: #f2f2f2; }
.sm-crumb i { font-size: 9px; margin: 0 7px; }
.sm-tools { display: flex; align-items: center; margin-left: auto; font-size: 8.500px; width: 260px; flex: none; position: relative; height: 20px; }
.sm-dd { width: 0; height: 0; border: 3px solid transparent; border-top-color: #ddd; margin: 3px 7px 0 0; }
.ref { width: 20px; height: 20px; }
.sm-bar { width: 1px; height: 13px; background: #ddd; margin: 0 16px 0 9px; }
.flag { width: 13px; height: 18px; margin: -3px 18px 0 0; }
.m1 { margin-right: 18px; } .m2 { margin-right: 20px; } .m3 { margin-right: 21.5px; }
.sm-body { height: 506px; flex: none; display: flex; }
.sm-nav { width: 164px; flex: none; background: #f5f5f5; border-right: 2px solid #cfcfcf; padding-top: 16px; font-size: 9.8px; color: #444; }
.sn { height: 19.500px; display: flex; align-items: center; padding-left: 13px; white-space: nowrap; }
.sn svg { width: 12px; height: 12px; margin-right: 6px; flex: none; }
.sn svg.sn-arr { width: 6px; height: 9px; margin: 0 0 0 9px; }
.sn.sel { background: #0a6dbd; color: #fff; }
.sm-main { width: 784px; flex: none; padding-left: 18px; background: #f5f5f5; font-size: 8.600px; }
.sm-scroll { flex: 1; background: #f0f0f0; padding-top: 4px; }
.sm-scroll i { display: block; height: 153px; background: #cdcdcd; }
.sec-head { height: 34px; width: 746px; display: flex; align-items: flex-end; padding-top: 7px; }
.srv-ic { width: 13px; height: 24px; margin: 0 11px 3px 5px; background: linear-gradient(#a8a8a8 0 4px, #777 4px 5px, #666 5px, #888); margin-bottom: 3px; }
.sec-txt { display: flex; flex-direction: column; line-height: 13px; margin-bottom: 1px; }
.sec-txt b { color: #666; font-weight: 700; font-size: 10px; }
.sec-txt span { color: #777; font-size: 8.900px; }
.tasks { margin: 0 0 2px auto; width: 56px; height: 14px; border: 1px solid #aaa; background: #fff; display: flex; align-items: center; padding-left: 6px; color: #666; font-size: 8.800px; }
.tasks i { width: 0; height: 0; border: 3.500px solid transparent; border-top-color: #333; margin: 4px 0 0 auto; margin-right: 3px; }
.prop-box { width: 746px; height: 264px; border: 1px solid #a6a6a6; background: #f6f6f6; padding: 12px 0 0 7px; position: relative; }
.pr { height: 15px; display: grid; grid-template-columns: 128px 230px 146px 232px; line-height: 15px; white-space: nowrap; color: #808080; }
.pr > * { overflow: hidden; }
.pr a { color: #2678b8; }
.pg2 { margin-top: 26px; }
.pg3 { margin-top: 41px; }
.wu { padding-left: 8px; }
.tz { padding-left: 18px; }
.cpu { padding-left: 80px; }
.hbar { position: absolute; left: 0; right: 0; bottom: 0; height: 12px; background: #f0f0f0; display: flex; align-items: center; color: #777; }
.hbar .ar { width: 12px; text-align: center; line-height: 10px; }
.hbar .ar:last-child { margin-left: auto; }
.hbar .th { width: 380px; height: 12px; background: #cdcdcd; }
.ev-head { height: 57px; padding: 0; }
.ev-head .tasks { margin-bottom: 2px; }
.ev-head .sec-txt { margin-bottom: 1px; }
.ev-box { width: 746px; height: 151px; border: 1px solid #a6a6a6; border-bottom: 0; background: #fff; overflow: hidden; position: relative; }
.ev-tool { height: 44px; background: #eeeeee; display: flex; align-items: center; padding: 0 0 3px 6px; }
.filter { width: 164px; height: 19px; background: #fff; border: 1px solid #ddd; display: flex; align-items: center; padding: 0 3px; }
.filter em { color: #888; font-size: 8.800px; }
.filter svg { width: 10px; height: 10px; margin-left: auto; }
.ev-ic { width: 14px; height: 14px; margin-left: 21px; }
.ev-ic.second { margin-left: 18px; }
.dd { width: 0; height: 0; border: 3.500px solid transparent; border-top-color: #222; margin: 4px 0 0 7px; }
.ev-chev { width: 14px; height: 14px; margin-left: auto; margin-right: 10px; }
.ev-row { height: 18px; display: grid; grid-template-columns: 90px 32px 41px 225px 53px 1fr; padding-left: 3px; align-items: center; white-space: nowrap; color: #666; }
.ev-row > span { overflow: visible; }
.ev-hd { height: 19px; margin-bottom: 4px; color: #3b85c4; }
.ev-scroll { position: absolute; right: 0; top: 69px; bottom: 0; width: 13px; background: #f3f3f3; padding-top: 12px; }
.ev-scroll i { display: block; height: 38px; background: #cdcdcd; }

.taskbar { height: 30px; flex: none; background: #03111f; display: flex; align-items: center; position: relative; }
.start { width: 37px; height: 30px; display: flex; align-items: center; padding-left: 13px; }
.start svg { width: 12px; height: 12px; }
.search { width: 258px; height: 30px; background: #f0f0f0; display: flex; align-items: center; padding-left: 9px; font-size: 10.3px; color: #444; border: 1px solid #ccc; border-width: 1px 1px 1px 0; }
.search svg { width: 12px; height: 12px; margin-right: 9px; }
.tk { flex: none; }
.tv { width: 13px; height: 13px; margin-left: 11px; }
.edge { width: 18px; height: 18px; margin-left: 23px; }
.folder { width: 17px; height: 15px; margin-left: 19px; }
.tk-wrap { display: flex; align-items: center; justify-content: center; height: 30px; border-bottom: 2px solid #76b9ed; flex: none; }
.sm-app { width: 30px; margin-left: 14px; }
.sm-app svg { width: 18px; height: 18px; }
.cp-app { width: 36px; margin-left: 3px; background: #2a3a48; }
.cp-app svg { width: 15px; height: 13px; }
.tray { margin-left: auto; display: flex; align-items: center; color: #ddd; font-size: 8.500px; height: 30px; }
.chev { width: 10px; height: 6px; margin-right: 7px; }
.globe { width: 14px; height: 14px; margin-right: 5px; }
.spk { width: 13px; height: 11px; margin-right: 8px; }
.clock { display: flex; flex-direction: column; align-items: center; line-height: 13.500px; margin-right: 15px; }
.notif { width: 13px; height: 12px; margin-right: 14px; }
.peek { width: 1px; height: 30px; background: #777; margin-right: 3px; }

.win { position: absolute; }
.eth { left: 558px; top: 121px; width: 271px; height: 337px; background: #efefef; border: 1px solid #aaa; }
.eth-head { height: 23px; background: #fff; display: flex; align-items: center; padding-left: 8px; color: #999; }
.eth-head svg { width: 7px; height: 12px; margin-right: 7px; }
.eth-head .x { width: 9px; height: 9px; margin: 0 8px 0 auto; }
.dlg { left: 563px; top: 145px; width: 271px; height: 327px; background: #efefef; border: 1px solid #a0a0a0; color: #333; display: flex; flex-direction: column; }
.dlg-head { height: 22px; flex: none; background: #fff; display: flex; align-items: center; padding: 0 7px 2px 6px; font-size: 8.500px; color: #222; }
.dlg-head svg { width: 9px; height: 9px; margin-left: auto; }
.dlg-body { padding: 7px 7px 0 8px; flex: 1; }
.dlg-lbl { font-size: 8.200px; line-height: 13px; color: #222; }
.list { margin: 2px 0 0 1px; width: 254px; height: 240px; background: #fff; border: 1px solid #a0a0a0; position: relative; padding: 3px 0 0 5px; font-size: 8.200px; color: #333; }
.li { height: 12.790px; display: grid; grid-template-columns: 100px 1fr; line-height: 12.790px; white-space: nowrap; overflow: hidden; }
.li span { overflow: hidden; }
.li span + span { letter-spacing: -.1px; }
.li-hd { height: 15px; line-height: 12px; }
.lbar { position: absolute; left: 0; right: 0; bottom: 1px; height: 11px; background: #f2f2f2; display: flex; align-items: center; color: #333; font-size: 9px; padding: 0 3px; }
.lbar b { width: 213px; height: 11px; background: #c8c8c8; margin: 0 auto 0 6px; }
.dlg-sep { margin: 8px 0 0 1px; height: 1px; width: 252px; background: #aaa; }
.dlg-foot { display: flex; justify-content: flex-end; padding: 6px 0 0; margin-right: 1px; }
.close-btn { width: 55px; height: 16px; padding: 0; background: #e1e1e1; border: 1px solid #0078d7; font: 8.500px "Open Sans", sans-serif; color: #222; outline: 1px solid #0078d7; outline-offset: -2px; }
.cursor { position: absolute; left: 776px; top: 588px; width: 8px; height: 12px; }

/* noVNC */
.vnc { position: absolute; left: 0; top: 160px; display: flex; align-items: flex-start; font-family: "DejaVu Sans", sans-serif; }
.vnc-panel { width: 55px; height: 280px; border-radius: 0 10px 10px 0; box-shadow: 6px 6px 0 rgba(0,0,0,.3); display: flex; flex-direction: column; align-items: center; padding-top: 10px; gap: 10px; }
.vnc-panel.blue { background: #5e7089; padding-top: 12px; }
.vnc-panel.gray { background: #505050; border-radius: 10px; margin-left: 5px; padding-top: 10px; }
.vnc-logo { width: 35px; height: 22px; display: flex; flex-direction: column; font-weight: 700; line-height: 11px; font-size: 12px; margin-bottom: -1px; }
.lg-no { color: #0d6e0d; text-shadow: 1px 0 #0d6e0d; display: block; transform: scaleX(1.25); transform-origin: left; }
.lg-vnc { color: #d6d60d; display: block; transform: scaleX(1.35); transform-origin: left; }
.vnc-div { width: 35px; height: 1px; background: rgba(255,255,255,.25); margin-bottom: 0; }
.vb { width: 35px; height: 35px; border: 1px solid rgba(255,255,255,.2); border-radius: 6px; display: flex; align-items: center; justify-content: center; flex: none; }
.vb svg { width: 20px; height: 20px; }
.vb.act { background: #2d384b; border-color: #11151c; }
.vt { font: 700 10px "DejaVu Sans", sans-serif; fill: #eee; text-anchor: middle; }
.gt { color: #ddd; font-weight: 700; font-size: 9.500px; }
.vnc-handle { width: 15px; height: 50px; margin-top: 36px; background: #4a5b73 radial-gradient(circle, #6b7c94 1px, transparent 1.2px) 0 0 / 5px 5px; border-radius: 0 4px 4px 0; box-shadow: 3px 3px 0 rgba(0,0,0,.3); display: flex; align-items: center; justify-content: center; }
.vnc-handle i { width: 0; height: 0; border: 4px solid transparent; border-right-color: #eee; margin-left: -2px; }

/* footer */
.foot { height: 57px; flex: none; border-top: 2px solid #e4e5ea; display: flex; align-items: center; padding: 0 16px 3px 16px; font-size: 15.500px; color: #869099; background: #fff; }
.foot a { color: #007bff; }
.ver { margin-left: auto; }
.strip { height: 3px; flex: none; background: linear-gradient(90deg, #bcdde0, #dfeed8 55%, #eeeccd); }
```
